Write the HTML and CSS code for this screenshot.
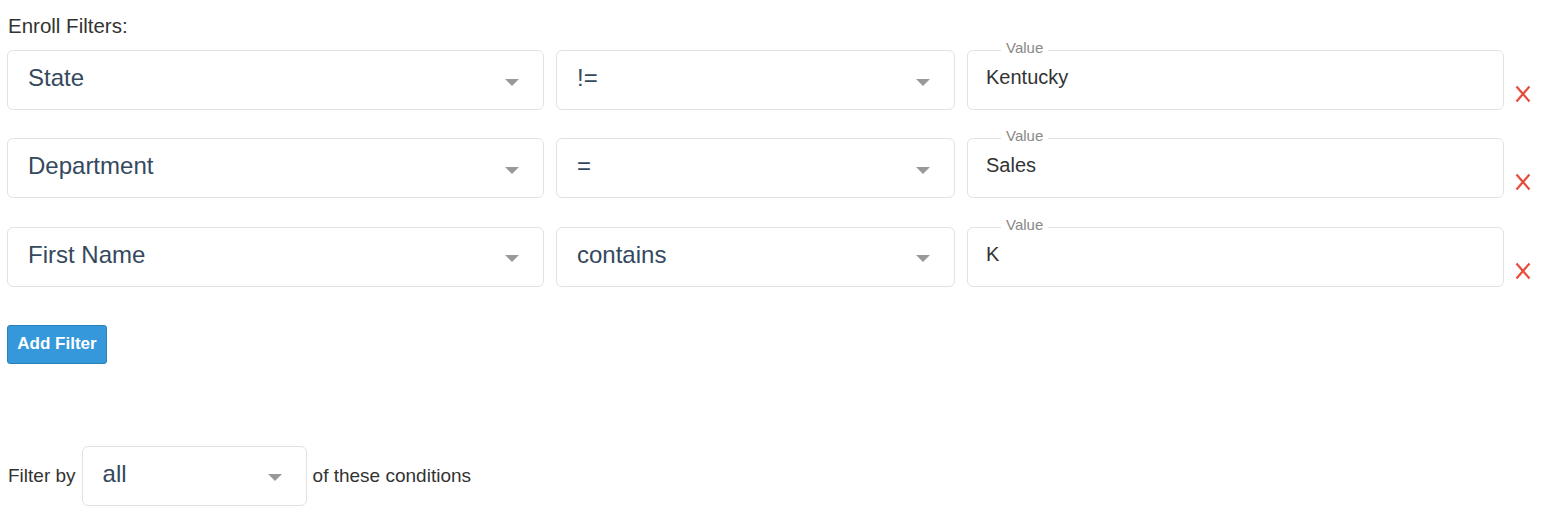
FILE: index.html
```html
<!DOCTYPE html>
<html>
<head>
<meta charset="utf-8">
<link rel="stylesheet" href="styles.css">
</head>
<body>
<div class="page">
  <div class="title">Enroll Filters:</div>
  <div class="row">
    <div class="select field-wide"><span class="sel-text">State</span><span class="caret"></span></div>
    <div class="select field-op"><span class="sel-text">!=</span><span class="caret"></span></div>
    <div class="value field-wide"><span class="legend">Value</span><span class="val-text">Kentucky</span></div>
    <svg class="remove" width="16" height="18" viewBox="0 0 16 18"><path d="M1.5 1.5 L14.5 16.5 M14.5 1.5 L1.5 16.5" stroke="#e74c3c" stroke-width="2.2" fill="none"/></svg>
  </div>
  <div class="row">
    <div class="select field-wide"><span class="sel-text">Department</span><span class="caret"></span></div>
    <div class="select field-op"><span class="sel-text">=</span><span class="caret"></span></div>
    <div class="value field-wide"><span class="legend">Value</span><span class="val-text">Sales</span></div>
    <svg class="remove" width="16" height="18" viewBox="0 0 16 18"><path d="M1.5 1.5 L14.5 16.5 M14.5 1.5 L1.5 16.5" stroke="#e74c3c" stroke-width="2.2" fill="none"/></svg>
  </div>
  <div class="row">
    <div class="select field-wide"><span class="sel-text">First Name</span><span class="caret"></span></div>
    <div class="select field-op"><span class="sel-text">contains</span><span class="caret"></span></div>
    <div class="value field-wide"><span class="legend">Value</span><span class="val-text">K</span></div>
    <svg class="remove" width="16" height="18" viewBox="0 0 16 18"><path d="M1.5 1.5 L14.5 16.5 M14.5 1.5 L1.5 16.5" stroke="#e74c3c" stroke-width="2.2" fill="none"/></svg>
  </div>
  <button class="add-btn">Add Filter</button>
  <div class="filter-by">
    <span class="fb-text fb-lead">Filter by</span>
    <div class="select field-mode"><span class="sel-text">all</span><span class="caret"></span></div>
    <span class="fb-text">of these conditions</span>
  </div>
</div>
</body>
</html>
```
FILE: styles.css
```css
* { box-sizing: border-box; }
body {
  margin: 0;
  background: #fff;
  font-family: "Liberation Sans", Arial, sans-serif;
  color: #333;
}
.page {
  padding: 15px 0 0 7px;
}
.title {
  font-size: 20.5px;
  line-height: 22px;
  margin-left: 1px;
  margin-bottom: 13px;
  color: #333;
}
.row {
  display: flex;
  gap: 12px;
  height: 60px;
  margin-bottom: 28.4px;
}
.select, .value {
  position: relative;
  height: 60px;
  border: 1px solid #e2e2e2;
  border-radius: 6px;
  background: #fff;
}
.field-wide { width: 537px; }
.field-op { width: 399px; }
.field-mode { width: 225px; }
.select {
  display: flex;
  align-items: center;
  padding: 0 24px 4px 20px;
}
.sel-text {
  flex: 1;
  font-size: 24px;
  color: #34495e;
}
.caret {
  width: 0;
  height: 0;
  border-left: 7px solid transparent;
  border-right: 7px solid transparent;
  border-top: 7px solid #999;
  margin-top: 8px;
}
.value {
  padding: 14px 18px 0;
}
.legend {
  position: absolute;
  top: -12px;
  left: 33px;
  padding: 0 5px;
  background: #fff;
  font-size: 15px;
  line-height: 18px;
  color: #888;
}
.val-text {
  font-size: 20px;
  line-height: 24px;
  color: #333;
}
.remove {
  align-self: flex-end;
  margin-left: -1px;
  margin-bottom: 7px;
}
.add-btn {
  display: block;
  margin-top: 38.2px;
  width: 100px;
  height: 39px;
  border: 1px solid #2a80b9;
  border-radius: 3px;
  background: #3498db;
  color: #fff;
  font-family: "Liberation Sans", Arial, sans-serif;
  font-weight: bold;
  font-size: 17px;
  padding: 0;
}
.filter-by {
  display: flex;
  align-items: center;
  gap: 6px;
  margin-top: 82px;
}
.fb-text {
  font-size: 19px;
  color: #333;
}
.fb-lead {
  margin-left: 1px;
}
```
